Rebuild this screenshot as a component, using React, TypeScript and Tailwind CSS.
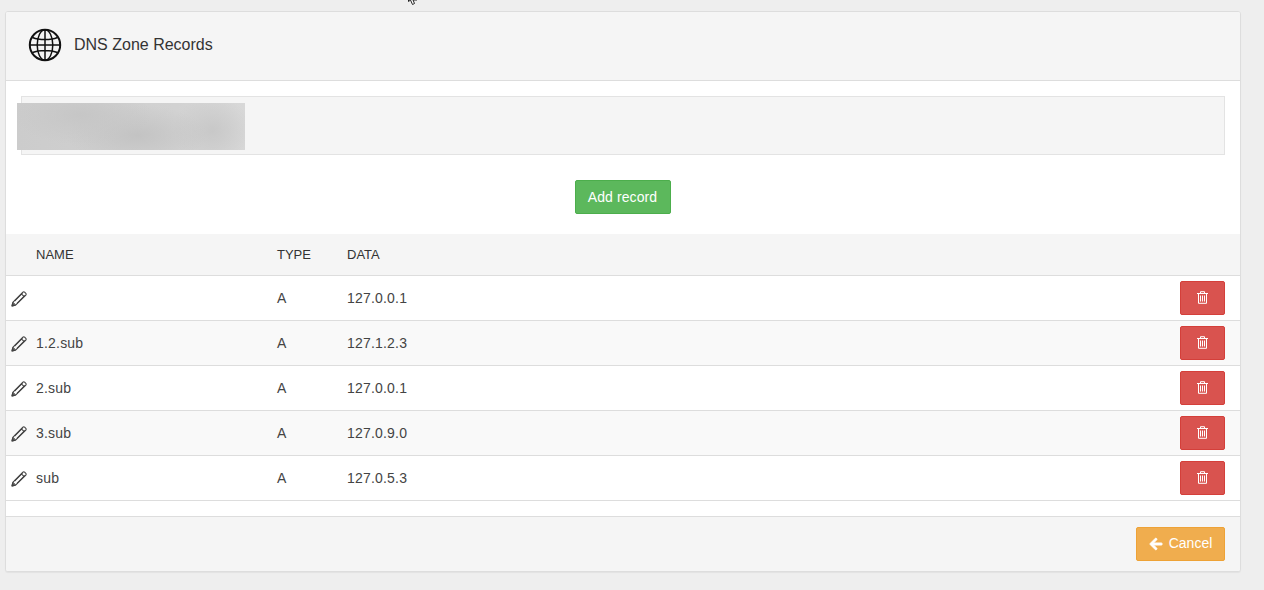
import { FaArrowLeft } from 'react-icons/fa';

const records = [
  { name: '', type: 'A', data: '127.0.0.1' },
  { name: '1.2.sub', type: 'A', data: '127.1.2.3' },
  { name: '2.sub', type: 'A', data: '127.0.0.1' },
  { name: '3.sub', type: 'A', data: '127.0.9.0' },
  { name: 'sub', type: 'A', data: '127.0.5.3' },
];

function GlobeIcon() {
  return (
    <svg width="34" height="34" viewBox="0 0 34 34" fill="none" stroke="#111" strokeWidth="1.5">
      <circle cx="17" cy="17" r="15.2" strokeWidth="2" />
      <ellipse cx="17" cy="17" rx="7.8" ry="15.2" />
      <path d="M17 2v30M2 17h30M4.6 9.5C8 11 12.3 11.6 17 11.6s9-.6 12.4-2.1M4.6 24.5C8 23 12.3 22.4 17 22.4s9 .6 12.4 2.1" />
    </svg>
  );
}

function PencilIcon() {
  return (
    <svg width="16" height="16" viewBox="0 0 16 16" fill="none" stroke="#444" strokeWidth="1.1" strokeLinejoin="round">
      <path d="M4.6 14.2 1 15l.8-3.6L11.9 1.2a1.2 1.2 0 0 1 1.7 0l1.2 1.2a1.2 1.2 0 0 1 0 1.7z" />
      <path d="M1.8 11.4l2.8 2.8M10.4 2.8l2.8 2.8M3.6 10l7.9-7.9M6 12.4l7.9-7.9" />
      <path d="M1 15l.5-2.2 1.7 1.7z" fill="#333" />
    </svg>
  );
}

function TrashIcon() {
  return (
    <svg width="11" height="13" viewBox="0 0 11 13" fill="none" stroke="#fff" strokeWidth="1">
      <path d="M0 2.5h11M3.5 2.5V.7h4v1.8M1.5 2.5v9.8h8V2.5" />
      <path d="M3.5 4.5v6M5.5 4.5v6M7.5 4.5v6" />
    </svg>
  );
}

function MouseCursor() {
  return (
    <svg className="absolute left-[407px] top-0" width="12" height="6" viewBox="0 0 12 6" fill="#fff" stroke="#222" strokeWidth="1">
      <path d="M1.5 -3 1.5 1.5 3.5 0 5.5 4.5 7.5 3.5 6 0 10 0" />
    </svg>
  );
}

export default function App() {
  return (
    <div className="relative h-[590px] overflow-hidden bg-[#eeeeee] px-[5px] pt-[11px] font-['Liberation_Sans',Arial,sans-serif] text-[14px] text-[#333333]">
      <MouseCursor />
      <div className="w-[1236px] overflow-hidden rounded-[3px] border border-[#dddddd] bg-white shadow-[0_1px_1px_rgba(0,0,0,0.05)]">
        <div className="flex h-[69px] items-center gap-[12px] border-b border-[#dddddd] bg-[#f5f5f5] pb-[2px] pl-[22px]">
          <GlobeIcon />
          <h3 className="text-[16px]">DNS Zone Records</h3>
        </div>

        <div className="relative mx-[15px] mt-[15px] h-[59px] border border-[#e3e3e3] bg-[#f5f5f5]">
          <div className="absolute -left-[5px] top-[6px] h-[47px] w-[228px] bg-[#cfcfcf] bg-[radial-gradient(ellipse_70px_30px_at_65px_12px,#c6c6c6,transparent),radial-gradient(ellipse_70px_30px_at_120px_32px,#c3c3c3,transparent),radial-gradient(ellipse_40px_34px_at_195px_28px,#c8c8c8,transparent),linear-gradient(90deg,#cccccc,#d2d2d2_70%,#d8d8d8)]" />
        </div>

        <div className="flex justify-center pt-[25px] pb-[20px] pr-[1px]">
          <button className="h-[34px] w-[96px] rounded-[2px] border border-[#4cae4c] bg-[#5cb85c] tracking-[0.1px] text-white">
            Add record
          </button>
        </div>

        <table className="w-full table-fixed border-collapse">
          <thead>
            <tr className="h-[41px] border-b border-[#dddddd] bg-[#f5f5f5] text-left text-[13px]">
              <th className="w-[271px] pl-[30px] font-normal">NAME</th>
              <th className="w-[70px] font-normal">TYPE</th>
              <th className="font-normal">DATA</th>
              <th className="w-[60px]" />
            </tr>
          </thead>
          <tbody>
            {records.map((r, i) => (
              <tr key={i} className={`h-[45px] border-b border-[#dddddd] text-[#444444] ${i % 2 === 1 ? 'bg-[#f9f9f9]' : 'bg-white'}`}>
                <td className="pl-[5px] pt-[2px]">
                  <div className="flex items-center gap-[9px]">
                    <PencilIcon />
                    <span className="tracking-[0.2px]">{r.name}</span>
                  </div>
                </td>
                <td className="pt-[2px]">{r.type}</td>
                <td className="pt-[2px] tracking-[0.2px]">{r.data}</td>
                <td>
                  <button className="flex h-[34px] w-[45px] items-center justify-center rounded-[2px] border border-[#d43f3a] bg-[#d9534f]">
                    <TrashIcon />
                  </button>
                </td>
              </tr>
            ))}
          </tbody>
        </table>

        <div className="mt-[15px] flex h-[55px] items-start justify-end border-t border-[#dddddd] bg-[#f5f5f5] pt-[10px] pr-[15px]">
          <button className="flex h-[34px] w-[89px] items-center justify-center gap-[6px] rounded-[2px] border border-[#eea236] bg-[#f0ad4e] text-white">
            <FaArrowLeft className="h-[14px] w-[14px] stroke-white stroke-[30px]" />
            Cancel
          </button>
        </div>
      </div>
    </div>
  );
}
